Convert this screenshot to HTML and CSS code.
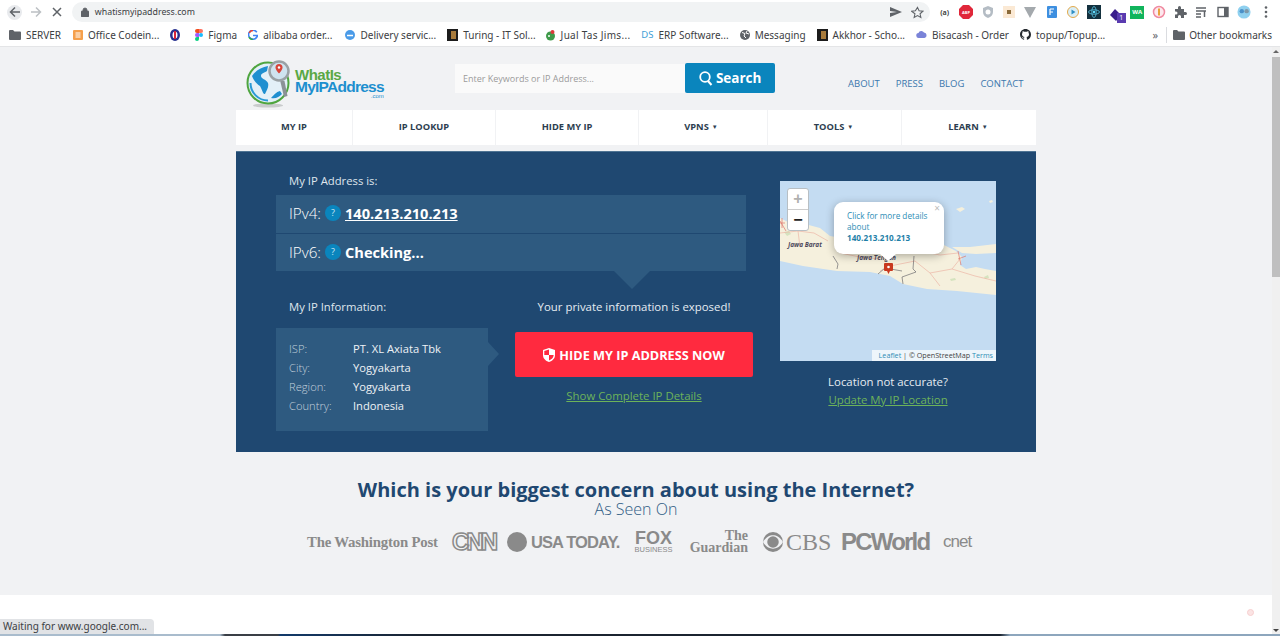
FILE: index.html
```html
<!DOCTYPE html>
<html lang="en">
<head>
    <meta charset="UTF-8">
    <meta name="viewport" content="width=device-width, initial-scale=1.0">
    <title>What Is My IP Address</title>
    <link rel="stylesheet" href="styles.css">
</head>
<body>
    <div class="toolbar">
        <div class="nav-btns">
            <span class="round-btn"><svg width="12" height="12" viewBox="0 0 12 12"><path d="M11 6H2M6 1.500 1.500 6 6 10.500" fill="none" stroke="#5f6368" stroke-width="1.500"/></svg></span>
            <span class="plain-btn"><svg width="12" height="12" viewBox="0 0 12 12"><path d="M1 6h9M6 1.500 10.500 6 6 10.500" fill="none" stroke="#bcc0c4" stroke-width="1.500"/></svg></span>
            <span class="plain-btn"><svg width="12" height="12" viewBox="0 0 12 12"><path d="M2 2l8 8M10 2l-8 8" fill="none" stroke="#5f6368" stroke-width="1.500"/></svg></span>
        </div>
        <div class="omnibox">
            <svg class="lock" width="8" height="10" viewBox="0 0 8 10"><path d="M1 4h6a1 1 0 0 1 1 1v4a1 1 0 0 1-1 1H1a1 1 0 0 1-1-1V5a1 1 0 0 1 1-1zM2 4V3a2 2 0 0 1 4 0v1" fill="#5f6368" stroke="#5f6368" stroke-width=".8"/></svg>
            <span class="url">whatismyipaddress.com</span>
            <svg class="omni-send" width="12" height="10" viewBox="0 0 12 10"><path d="M0 0l12 5-12 5V6l7-1-7-1z" fill="#5f6368"/></svg>
            <svg class="omni-star" width="13" height="13" viewBox="0 0 24 24"><path d="M12 2.500l2.900 6.400 7 .7-5.200 4.700 1.500 6.900-6.200-3.600-6.200 3.600 1.500-6.900L1.100 9.600l7-.7z" fill="none" stroke="#5f6368" stroke-width="2"/></svg>
        </div>
        <div class="ext-icons">
            <span class="ext ext-text">(a)</span>
            <svg class="ext" width="14" height="14" viewBox="0 0 14 14"><path d="M4 0h6l4 4v6l-4 4H4l-4-4V4z" fill="#e0273a"/><text x="7" y="9" class="abp">ABP</text></svg>
            <svg class="ext" width="14" height="14" viewBox="0 0 14 14"><path d="M7 1l5 2v4c0 3-2 5-5 6-3-1-5-3-5-6V3z" fill="#b4bcc4"/><circle cx="7" cy="7" r="2.500" fill="#fff"/></svg>
            <svg class="ext" width="14" height="14" viewBox="0 0 14 14"><rect x="1" y="1" width="12" height="12" fill="#fbe9d4"/><rect x="5" y="5" width="4" height="4" fill="#8a6a3a"/></svg>
            <svg class="ext" width="14" height="14" viewBox="0 0 14 14"><path d="M1 2h12L7 13z" fill="#a4a9ad"/></svg>
            <svg class="ext" width="14" height="14" viewBox="0 0 14 14"><rect x="2" y="1" width="10" height="12" rx="1" fill="#3d8fe0"/><path d="M5 4h4M5 7h3M5 4v6" stroke="#fff" stroke-width="1.200"/></svg>
            <svg class="ext" width="14" height="14" viewBox="0 0 14 14"><circle cx="7" cy="7" r="5.500" fill="#d9eef7" stroke="#e3a94a"/><path d="M5.500 4.500l4 2.500-4 2.500z" fill="#2f8fc4"/></svg>
            <svg class="ext" width="14" height="14" viewBox="0 0 14 14"><rect width="14" height="14" fill="#14313f"/><circle cx="7" cy="7" r="1.300" fill="#61dafb"/><ellipse cx="7" cy="7" rx="5.500" ry="2.200" fill="none" stroke="#61dafb" stroke-width=".7"/><ellipse cx="7" cy="7" rx="2.200" ry="5.500" fill="none" stroke="#61dafb" stroke-width=".7"/></svg>
            <span class="ext ext-badged"><svg width="14" height="14" viewBox="0 0 14 14"><path d="M6 1l6 6-5 6-6-6z" fill="#3a1e8c"/></svg><span class="ext-badge">1</span></span>
            <span class="ext ext-wa">WA</span>
            <svg class="ext" width="14" height="14" viewBox="0 0 14 14"><circle cx="7" cy="7" r="5.500" fill="#fde8ee" stroke="#f08aa0" stroke-width="1.500"/><path d="M7 3.500v7" stroke="#e9a13a" stroke-width="2"/></svg>
            <svg class="ext" width="14" height="14" viewBox="0 0 14 14"><path d="M2 4h3V2.500a1.500 1.500 0 0 1 3 0V4h3v3h1.500a1.500 1.500 0 0 1 0 3H11v3H8v-1.500a1.500 1.500 0 0 0-3 0V13H2V9.500h1a1.500 1.500 0 0 0 0-3H2z" fill="#5f6368"/></svg>
            <svg class="ext" width="14" height="14" viewBox="0 0 14 14"><path d="M2 3h10M2 6h10M2 9h5M2 12h5" stroke="#5f6368" stroke-width="1.300"/><path d="M10.500 6v6" stroke="#5f6368" stroke-width="1.500"/></svg>
            <svg class="ext" width="14" height="14" viewBox="0 0 14 14"><rect x="2" y="2.500" width="10" height="9" fill="none" stroke="#5f6368" stroke-width="1.400"/><rect x="8" y="2.500" width="4" height="9" fill="#5f6368"/></svg>
            <svg class="ext" width="14" height="14" viewBox="0 0 16 16"><circle cx="8" cy="8" r="7.500" fill="#8fd0ef"/><circle cx="5.500" cy="7" r="2.500" fill="#4a90c8"/><circle cx="11" cy="7" r="2.500" fill="#7f98a8"/></svg>
            <svg class="ext" width="14" height="14" viewBox="0 0 14 14"><circle cx="7" cy="2.500" r="1.300" fill="#5f6368"/><circle cx="7" cy="7" r="1.300" fill="#5f6368"/><circle cx="7" cy="11.500" r="1.300" fill="#5f6368"/></svg>
        </div>
    </div>

    <div class="bookmarks">
        <a class="bm bm-server"><svg width="12" height="10" viewBox="0 0 12 10"><path d="M0 1a1 1 0 0 1 1-1h3l1.500 1.500H11a1 1 0 0 1 1 1V9a1 1 0 0 1-1 1H1a1 1 0 0 1-1-1z" fill="#5f6368"/></svg>SERVER</a>
        <a class="bm"><svg width="10" height="10" viewBox="0 0 10 10"><rect width="10" height="10" rx="1" fill="#f5a04c"/><path d="M2.500 3h5M2.500 5h5M2.500 7h5" stroke="#fff"/></svg>Office Codein...</a>
        <a class="bm bm-icon"><svg width="10" height="12" viewBox="0 0 10 12"><ellipse cx="5" cy="6" rx="5" ry="6" fill="#27308f"/><ellipse cx="5" cy="6" rx="2.500" ry="3.500" fill="#fff"/><path d="M5 2v8" stroke="#d9263b" stroke-width="2"/></svg></a>
        <a class="bm"><svg width="8" height="12" viewBox="0 0 8 12"><circle cx="6" cy="6" r="2" fill="#1abcfe"/><path d="M2 0h2v4H2a2 2 0 0 1 0-4z" fill="#f24e1e"/><path d="M4 0h2a2 2 0 0 1 0 4H4z" fill="#ff7262"/><path d="M2 4h2v4H2a2 2 0 0 1 0-4z" fill="#a259ff"/><path d="M2 8h2v2a2 2 0 1 1-2-2z" fill="#0acf83"/></svg>Figma</a>
        <a class="bm bm-alibaba"><svg width="10" height="10" viewBox="0 0 10 10"><path d="M8.800 2.200A4.500 4.500 0 1 0 9.500 5.500H5" fill="none" stroke="#4285f4" stroke-width="1.600"/><path d="M1.200 2.800A4.500 4.500 0 0 1 5 .5" fill="none" stroke="#ea4335" stroke-width="1.600"/><path d="M1 7.200a4.500 4.500 0 0 0 4 2.300" fill="none" stroke="#34a853" stroke-width="1.600"/></svg>alibaba order...</a>
        <a class="bm"><svg width="10" height="10" viewBox="0 0 10 10"><circle cx="5" cy="5" r="5" fill="#4a9be8"/><path d="M2 5.500h6" stroke="#fff" stroke-width="1.500"/></svg>Delivery servic...</a>
        <a class="bm bm-turing"><svg width="11" height="12" viewBox="0 0 11 12"><rect width="11" height="12" fill="#1c1c1c"/><rect x="4" y="2" width="5" height="8" fill="#a87b3c"/></svg>Turing - IT Sol...</a>
        <a class="bm"><svg width="11" height="12" viewBox="0 0 11 12"><circle cx="5.500" cy="7" r="4.500" fill="#3f9a4a"/><circle cx="7.500" cy="3" r="2" fill="#dc3a3a"/><circle cx="4" cy="7" r="1" fill="#fff"/></svg><span class="bm-wide">Jual Tas Jims...</span></a>
        <a class="bm"><span class="ds">DS</span>ERP Software...</a>
        <a class="bm"><svg width="10" height="10" viewBox="0 0 10 10"><circle cx="5" cy="5" r="5" fill="#5f6368"/><path d="M2 2.500l3 1-1 2.500 2 2M7 1l-1 2 3 1" fill="none" stroke="#fff"/></svg>Messaging</a>
        <a class="bm"><svg width="11" height="12" viewBox="0 0 11 12"><rect width="11" height="12" fill="#1c1c1c"/><rect x="4" y="2" width="5" height="8" fill="#a87b3c"/></svg>Akkhor - Scho...</a>
        <a class="bm"><svg width="11" height="9" viewBox="0 0 11 9"><path d="M3 8a2.500 2.500 0 0 1-.5-5A3 3 0 0 1 8 2.500 2.800 2.800 0 0 1 8.500 8z" fill="#7a83d8"/></svg>Bisacash - Order</a>
        <a class="bm"><svg width="11" height="11" viewBox="0 0 16 16"><path d="M8 0C3.580 0 0 3.580 0 8c0 3.540 2.290 6.530 5.470 7.590.4.070.55-.17.55-.38 0-.19-.01-.82-.01-1.490-2.010.37-2.530-.49-2.690-.94-.09-.23-.48-.94-.82-1.130-.28-.15-.68-.52-.01-.53.630-.01 1.080.58 1.230.82.720 1.210 1.870.87 2.330.66.070-.52.280-.87.510-1.070-1.780-.2-3.640-.89-3.640-3.950 0-.87.310-1.590.820-2.150-.08-.2-.36-1.020.08-2.120 0 0 .67-.21 2.200.82.640-.18 1.320-.27 2-.27s1.360.09 2 .27c1.530-1.040 2.200-.82 2.200-.82.440 1.100.160 1.920.080 2.120.51.560.82 1.270.82 2.150 0 3.070-1.870 3.750-3.650 3.950.290.25.540.73.540 1.480 0 1.070-.01 1.930-.01 2.200 0 .21.150.46.550.38A8.010 8.010 0 0 0 16 8c0-4.420-3.580-8-8-8z" fill="#24292e"/></svg>topup/Topup...</a>
        <span class="bm-more">»</span>
        <a class="bm bm-other"><svg width="12" height="10" viewBox="0 0 12 10"><path d="M0 1a1 1 0 0 1 1-1h3l1.500 1.500H11a1 1 0 0 1 1 1V9a1 1 0 0 1-1 1H1a1 1 0 0 1-1-1z" fill="#5f6368"/></svg>Other bookmarks</a>
    </div>

    <div class="viewport">
        <div class="page">
            <div class="wrap">
                <header class="site-header">
                    <a class="logo">
                        <svg width="46" height="48" viewBox="0 0 46 48">
                            <ellipse cx="22" cy="45.500" rx="15" ry="2" fill="#c9cbcc"/>
                            <circle cx="22" cy="23" r="20.500" fill="#e3f0f8" stroke="#4fa53f" stroke-width="2"/>
                            <path d="M4.500 23a17.500 17.500 0 0 0 17.500 17.500" fill="none" stroke="#2a9ad6" stroke-width="2"/>
                            <path d="M6 16c4-6 10-9 16-10l-1 5c-3 2-6 2-6 5 0 3 5 3 7 7 1 4-1 7-3 11-2 1-3-5-5-8-3-2-6-5-8-10z" fill="#1f8fd0"/>
                            <path d="M25 38c3-3 5-6 9-7l2 3c-3 3-6 5-11 4z" fill="#1f8fd0"/>
                            <path d="M34 20l4.500 1 3 15-3.500 1z" fill="#8b9296"/>
                            <circle cx="33" cy="11" r="9.500" fill="#cfe3ef" stroke="#9aa1a5" stroke-width="2.500"/>
                            <path d="M33 4a3.500 3.500 0 0 1 3.500 3.500c0 2.500-3.500 6-3.500 6s-3.500-3.500-3.500-6A3.500 3.500 0 0 1 33 4z" fill="#d8453a"/>
                            <circle cx="33" cy="7.500" r="1.200" fill="#fff"/>
                        </svg>
                        <span class="logo-text">
                            <span class="logo-what">WhatIs</span>
                            <span class="logo-my">MyIPAddress</span>
                            <span class="logo-com">.com</span>
                        </span>
                    </a>
                    <form class="search">
                        <input class="search-input" type="text" placeholder="Enter Keywords or IP Address...">
                        <button class="search-btn" type="button">
                            <svg width="14" height="15" viewBox="0 0 14 15"><circle cx="6" cy="6" r="4.800" fill="none" stroke="#fff" stroke-width="1.800"/><path d="M9 10l3.500 4" stroke="#fff" stroke-width="2"/></svg>
                            Search
                        </button>
                    </form>
                    <nav class="top-links">
                        <a>ABOUT</a>
                        <a>PRESS</a>
                        <a>BLOG</a>
                        <a>CONTACT</a>
                    </nav>
                </header>

                <nav class="main-nav">
                    <a class="nav-myip">MY IP</a>
                    <a class="nav-lookup">IP LOOKUP</a>
                    <a class="nav-hide">HIDE MY IP</a>
                    <a class="nav-vpns">VPNS <i>▼</i></a>
                    <a class="nav-tools">TOOLS <i>▼</i></a>
                    <a class="nav-learn">LEARN <i>▼</i></a>
                </nav>

                <section class="panel">
                    <div class="panel-left">
                        <div class="label">My IP Address is:</div>
                        <div class="ip-row ip-row-first">
                            <span class="ip-kind">IPv4:</span>
                            <span class="help">?</span>
                            <a class="ip-value ip-link">140.213.210.213</a>
                        </div>
                        <div class="ip-row ip-row-second">
                            <span class="ip-kind">IPv6:</span>
                            <span class="help">?</span>
                            <span class="ip-value">Checking...</span>
                        </div>
                        <div class="lower">
                            <div class="lower-info">
                                <div class="label">My IP Information:</div>
                                <dl class="info-box">
                                    <dt>ISP:</dt><dd>PT. XL Axiata Tbk</dd>
                                    <dt>City:</dt><dd>Yogyakarta</dd>
                                    <dt>Region:</dt><dd>Yogyakarta</dd>
                                    <dt>Country:</dt><dd>Indonesia</dd>
                                </dl>
                            </div>
                            <div class="lower-cta">
                                <div class="exposed">Your private information is exposed!</div>
                                <a class="hide-btn">
                                    <svg width="12" height="14" viewBox="0 0 12 14"><path d="M6 0l6 2v5c0 3.500-2.500 5.800-6 7-3.500-1.200-6-3.500-6-7V2z" fill="#fff"/><path d="M6 1.500V7H1.300V2.900zM6 7h4.700c-.3 2.800-2.200 4.500-4.700 5.500z" fill="#ff2a3f"/></svg>
                                    HIDE MY IP ADDRESS NOW
                                </a>
                                <a class="green-link">Show Complete IP Details</a>
                            </div>
                        </div>
                    </div>
                    <div class="panel-right">
                        <div class="map">
                            <svg class="map-art" width="216" height="180" viewBox="0 0 216 180">
                                <rect width="216" height="180" fill="#c4dcf2"/>
                                <path d="M0 37L10 42 25 43 40 47 50 55 80 60 130 62 164 64 176 70 182 76 180 84 186 88 196 86 205 88 216 90V114L177 110 147 108 123 103 110 95 90 91 57 90 23 85 0 80Z" fill="#f5f0dd"/>
                                <path d="M172 66L190 66 216 63V72L196 73 182 72Z" fill="#f5f0dd"/>
                                <path d="M176 28l6-2 3 2-5 3zM209 20l3-1 1 2-3 1z" fill="#f5f0dd"/>
                                <path d="M4 51l5-1 2 3-4 2zM170 98l5-1 1 2-5 1zM204 96l4-2 1 3-4 1z" fill="#d5e3bf"/>
                                <g fill="none" stroke="#ecb6a6" stroke-width=".7">
                                    <path d="M18 50L20 66M34 52L48 60M0 52L18 50 34 52"/>
                                    <path d="M100 90L110 85 135 80 150 92 172 88 180 78M150 92L160 105M172 88L195 95 216 100"/>
                                    <path d="M60 72L80 76 100 78M140 70L160 74 178 72"/>
                                </g>
                                <g fill="none" stroke="#e0776c" stroke-width=".7">
                                    <path d="M0 42h5M2 37v10M0 40L6 50M178 70L181 84M178 78l8-3"/>
                                </g>
                                <g fill="none" stroke="#55555e" stroke-width=".6">
                                    <path d="M53 75L58 83 57 88M134 75L133 88 136 91 122 96 123 103M98 93L105 87 122 90"/>
                                </g>
                                <text class="map-place" x="8" y="66">Jawa Barat</text>
                                <text class="map-place" x="77" y="79">Jawa Tengah</text>
                            </svg>
                            <svg class="map-marker" width="9" height="11" viewBox="0 0 9 11"><path d="M1 0h7a1 1 0 0 1 1 1v6a1 1 0 0 1-1 1H6l-1.500 3L3 8H1a1 1 0 0 1-1-1V1a1 1 0 0 1 1-1z" fill="#c9391f"/><circle cx="4.500" cy="4" r="1.300" fill="#fff"/></svg>
                            <div class="zoom-ctl">
                                <span class="zoom-in">+</span>
                                <span class="zoom-out">−</span>
                            </div>
                            <div class="popup">
                                <span class="popup-close">×</span>
                                Click for more details about
                                <b>140.213.210.213</b>
                            </div>
                            <div class="attrib"><a>Leaflet</a> | © OpenStreetMap <a>Terms</a></div>
                        </div>
                        <div class="not-accurate">Location not accurate?</div>
                        <a class="green-link update-link">Update My IP Location</a>
                    </div>
                </section>

                <h2 class="concern">Which is your biggest concern about using the Internet?</h2>
                <div class="seen-on">As Seen On</div>
                <div class="press-logos">
                    <span class="pl-wapo">The Washington Post</span>
                    <span class="pl-cnn">CNN</span>
                    <span class="pl-usa"><i></i>USA TODAY.</span>
                    <span class="pl-fox"><b>FOX</b><small>BUSINESS</small></span>
                    <span class="pl-guardian"><span>The</span><span>Guardian</span></span>
                    <span class="pl-cbs"><svg width="22" height="22" viewBox="0 0 23 22"><circle cx="11.500" cy="11" r="10.500" fill="#8a8a8a"/><path d="M1 11c3-5 7-7 10.500-7S19 6 22 11c-3 5-7 7-10.500 7S4 16 1 11z" fill="#f1f2f4"/><circle cx="11.500" cy="11" r="6" fill="#8a8a8a"/></svg>CBS</span>
                    <span class="pl-pcw">PCWorld</span>
                    <span class="pl-cnet">cnet</span>
                </div>
            </div>
            <div class="white-band"><span class="corner-dot"></span></div>
        </div>
        <div class="scrollbar">
            <span class="sb-up"></span>
            <span class="sb-thumb"></span>
            <span class="sb-down"></span>
        </div>
        <div class="status">Waiting for www.google.com...</div>
        <div class="desk-edge"></div>
    </div>
</body>
</html>
```

FILE: styles.css
```css
html, body {
    margin: 0;
    height: 636px;
    overflow: hidden;
}
body {
    font-family: "Open Sans", Arial, sans-serif;
    background-color: #f1f2f4;
    color: #333;
}
a {
    cursor: pointer;
}

/* browser chrome */
.toolbar {
    display: flex;
    align-items: center;
    height: 24px;
    background: #fff;
}
.nav-btns {
    display: flex;
    align-items: center;
    width: 72px;
    padding-left: 7px;
    box-sizing: border-box;
    gap: 7px;
}
.round-btn, .plain-btn {
    display: flex;
    align-items: center;
    justify-content: center;
    width: 15px;
    height: 15px;
}
.round-btn {
    background: #e8eaed;
    border-radius: 50%;
}
.plain-btn {
    width: 14px;
}
.omnibox {
    display: flex;
    align-items: center;
    width: 860px;
    height: 20px;
    background: #f1f3f4;
    border-radius: 10px;
    box-sizing: border-box;
    padding: 0 6px 0 9px;
}
.url {
    margin-left: 6px;
    font-family: "Noto Sans", sans-serif;
    font-size: 8.8px;
    color: #3c4043;
    flex: 1;
}
.omni-star {
    margin-left: 9px;
}
.ext-icons {
    display: flex;
    align-items: center;
    margin-left: 8px;
}
.ext {
    display: block;
    width: 14px;
    margin-right: 7.4px;
    flex: none;
}
.ext-text {
    font-size: 7px;
    font-weight: 700;
    text-align: center;
    color: #444;
}
.abp {
    font-size: 4px;
    font-weight: 700;
    fill: #fff;
    text-anchor: middle;
}
.ext-badged {
    position: relative;
    height: 14px;
}
.ext-badge {
    position: absolute;
    right: -3px;
    bottom: -4px;
    width: 9px;
    height: 10px;
    background: #5a3bb0;
    color: #fff;
    font-size: 7px;
    line-height: 10px;
    text-align: center;
}
.ext-wa {
    height: 13px;
    background: #11b45c;
    color: #fff;
    font-size: 6px;
    font-weight: 700;
    line-height: 13px;
    text-align: center;
}
.bookmarks {
    display: flex;
    align-items: center;
    height: 21px;
    padding: 0 0 1px 9px;
    background: #fff;
    border-bottom: 1px solid #e4e5e7;
    font-family: "Noto Sans", sans-serif;
    font-size: 10px;
    color: #3c4043;
    white-space: nowrap;
}
.bm {
    display: flex;
    align-items: center;
    gap: 5px;
    margin-right: 11px;
    flex: none;
}
.bm-server { margin-right: 12px; }
.bm-icon { margin-right: 15px; }
.bm-alibaba { margin-right: 13px; }
.bm-turing { margin-right: 9px; }
.bm-wide {
    letter-spacing: .3px;
}
.ds {
    color: #3f9fd8;
    font-size: 9.5px;
}
.bm-more {
    margin-left: auto;
    padding-right: 8px;
    border-right: 1px solid #dadce0;
    margin-right: 6px;
    font-size: 11px;
    line-height: 16px;
    color: #5f6368;
}
.bm-other {
    gap: 4px;
    margin-right: 8px;
}

/* page */
.viewport {
    position: relative;
    display: flex;
    height: 589px;
    overflow: hidden;
}
.page {
    flex: 1;
    min-width: 0;
}
.wrap {
    width: 800px;
    margin: 0 auto 0 236px;
}
.site-header {
    display: flex;
    height: 63px;
}
.logo {
    display: flex;
    width: 219px;
    padding: 13px 0 0 10px;
    box-sizing: border-box;
    height: 63px;
    font-family: "Liberation Sans", Arial, sans-serif;
    font-weight: 700;
}
.logo-text {
    display: flex;
    flex-direction: column;
    margin-left: 3px;
    padding-top: 9px;
    line-height: 12px;
}
.logo-what {
    font-size: 15px;
    color: #5aa845;
    letter-spacing: -.5px;
}
.logo-my {
    font-size: 15.5px;
    color: #1d8fcf;
    letter-spacing: -.75px;
}
.logo-com {
    font-size: 6px;
    line-height: 7px;
    font-weight: 400;
    text-align: right;
    color: #1d8fcf;
}
.search {
    display: flex;
    width: 320px;
    height: 30px;
    margin-top: 16px;
}
.search-input {
    width: 231px;
    height: 29px;
    margin-top: 1px;
    padding: 0 8px;
    border: 0;
    box-sizing: border-box;
    background: #fafafa;
    font-family: inherit;
    font-size: 9px;
}
.search-input::placeholder {
    color: #9a9a9a;
}
.search-btn {
    display: flex;
    align-items: center;
    justify-content: center;
    gap: 3px;
    width: 90px;
    height: 30px;
    border: 0;
    border-radius: 2px;
    background: #0a85bd;
    color: #fff;
    font-family: inherit;
    font-size: 13.5px;
    font-weight: 700;
}
.top-links {
    display: flex;
    gap: 16px;
    margin: 30px 0 0 73px;
    font-size: 9.5px;
    line-height: 14px;
    height: 14px;
    color: #3b78ad;
}
.main-nav {
    display: flex;
    height: 35px;
    background: #fff;
    font-size: 9.3px;
    font-weight: 700;
    color: #2d3e50;
}
.main-nav a {
    display: flex;
    align-items: center;
    justify-content: center;
    gap: 3px;
    padding-bottom: 2px;
    box-sizing: border-box;
    border-right: 1px solid #f1f2f4;
}
.main-nav a:last-child {
    border-right: 0;
}
.main-nav i {
    font-size: 6px;
    font-style: normal;
}
.nav-myip { width: 117px; }
.nav-lookup { width: 143px; }
.nav-hide { width: 143px; }
.nav-vpns { width: 129px; padding-right: 4px; }
.nav-tools { width: 134px; padding-right: 2px; }
.nav-learn { width: 134px; padding-right: 2px; }

.panel {
    display: flex;
    height: 301px;
    margin-top: 6px;
    padding: 20px 0 0 40px;
    box-sizing: border-box;
    background: #1f4871;
    border-top: 1px solid #4f7493;
    color: #eef2f6;
}
.panel-left {
    width: 478px;
}
.label {
    padding-left: 13px;
    font-size: 11.3px;
    line-height: 17px;
    color: #dfe6ed;
}
.ip-row {
    display: flex;
    align-items: center;
    width: 470px;
    padding: 0 0 2px 13px;
    box-sizing: border-box;
    background: #2e5a80;
}
.ip-row-first {
    height: 38px;
    margin-top: 6px;
}
.ip-row-second {
    position: relative;
    height: 37px;
    margin-top: 1px;
}
.ip-row-second::after {
    content: "";
    position: absolute;
    left: 338px;
    top: 37px;
    border-style: solid;
    border-width: 18px 18px 0;
    border-color: #2e5a80 transparent transparent;
}
.ip-kind {
    font-size: 15.2px;
    font-weight: 300;
    width: 36px;
    color: #fff;
}
.help {
    width: 16px;
    height: 16px;
    margin-right: 4px;
    border-radius: 50%;
    background: #0a85bd;
    font-size: 9px;
    line-height: 16px;
    text-align: center;
    color: #cfe6f3;
}
.ip-value {
    font-size: 14.6px;
    font-weight: 700;
    color: #fff;
}
.ip-link {
    text-decoration: underline;
}
.lower {
    display: flex;
    margin-top: 27px;
}
.lower-info {
    width: 212px;
}
.info-box {
    position: relative;
    display: grid;
    grid-template-columns: 64px 1fr;
    grid-auto-rows: 19px;
    align-items: center;
    height: 103px;
    margin: 13px 0 0;
    padding: 11px 13px 0;
    box-sizing: border-box;
    background: #2e5a80;
    font-size: 11.2px;
}
.info-box::after {
    content: "";
    position: absolute;
    left: 212px;
    top: 14px;
    border-style: solid;
    border-width: 12px 0 12px 11px;
    border-color: transparent transparent transparent #2e5a80;
}
.info-box dt {
    font-weight: 300;
    color: #c3d0dc;
}
.info-box dd {
    margin: 0;
    color: #eef2f6;
}
.lower-cta {
    width: 238px;
    margin-left: 27px;
    display: flex;
    flex-direction: column;
    align-items: center;
}
.exposed {
    font-size: 11.4px;
    line-height: 17px;
    white-space: nowrap;
    color: #e6ecf1;
}
.hide-btn {
    display: flex;
    align-items: center;
    justify-content: center;
    gap: 4px;
    width: 100%;
    height: 45px;
    margin-top: 17px;
    border-radius: 2px;
    background: #ff2a3f;
    color: #fff;
    font-size: 12.7px;
    font-weight: 700;
}
.green-link {
    margin-top: 10px;
    font-size: 11.4px;
    line-height: 18px;
    color: #6db35a;
    text-decoration: underline;
}
.panel-right {
    display: flex;
    flex-direction: column;
    align-items: center;
    width: 216px;
    margin-left: 26px;
    padding-top: 9px;
}

/* leaflet map */
.map {
    position: relative;
    width: 216px;
    height: 180px;
    overflow: hidden;
}
.map-art {
    display: block;
}
.map-place {
    font-size: 6.5px;
    font-style: italic;
    font-weight: 700;
    fill: #4d4a5c;
}
.map-marker {
    position: absolute;
    left: 104px;
    top: 82px;
}
.zoom-ctl {
    position: absolute;
    left: 7px;
    top: 7px;
    width: 22px;
    border: 1px solid #b8bfc4;
    border-radius: 3px;
    background: #fff;
    box-sizing: border-box;
    text-align: center;
    font-family: "Liberation Sans", Arial, sans-serif;
    font-weight: 700;
    font-size: 16px;
    line-height: 20px;
}
.zoom-in {
    display: block;
    height: 20px;
    color: #b0b0b0;
    border-bottom: 1px solid #ccc;
}
.zoom-out {
    display: block;
    height: 20px;
    color: #222;
}
.popup {
    position: absolute;
    left: 54px;
    top: 21px;
    width: 110px;
    height: 52px;
    padding: 8px 13px 0;
    box-sizing: border-box;
    background: #fff;
    border-radius: 9px;
    box-shadow: 0 2px 8px rgba(0, 0, 0, .3);
    font-size: 8.2px;
    line-height: 11px;
    color: #2d8eb6;
}
.popup::after {
    content: "";
    position: absolute;
    left: 46px;
    top: 52px;
    border-style: solid;
    border-width: 7px 8px 0;
    border-color: #fff transparent transparent;
}
.popup b {
    display: block;
    color: #1f7fa8;
}
.popup-close {
    position: absolute;
    right: 4px;
    top: 1px;
    font-size: 10px;
    color: #bbb;
}
.attrib {
    position: absolute;
    right: 0;
    bottom: 0;
    width: 124px;
    height: 11px;
    padding-right: 3px;
    box-sizing: border-box;
    background: rgba(255, 255, 255, .7);
    font-size: 7.2px;
    line-height: 11px;
    text-align: right;
    white-space: nowrap;
    color: #444;
}
.attrib a {
    color: #2d8eb6;
}
.not-accurate {
    margin-top: 12px;
    font-size: 11.4px;
    line-height: 18px;
    color: #e6ecf1;
}
.update-link {
    margin-top: 0;
    line-height: 18px;
}

/* below the panel */
.concern {
    margin: 26px 0 0;
    font-size: 20px;
    line-height: 24px;
    font-weight: 700;
    text-align: center;
    color: #1f4871;
}
.seen-on {
    font-size: 16px;
    font-weight: 300;
    line-height: 14px;
    text-align: center;
    color: #2f5c85;
}
.press-logos {
    display: flex;
    align-items: center;
    height: 28px;
    margin: 12px 0 0 71px;
    gap: 13px;
    color: #8a8a8a;
    white-space: nowrap;
    font-family: "Liberation Sans", Arial, sans-serif;
}
.pl-wapo {
    width: 131px;
    font-family: "Liberation Serif", serif;
    font-weight: 700;
    font-size: 14.8px;
    letter-spacing: -.2px;
}
.pl-cnn {
    width: 42px;
    margin-left: 1px;
    font-size: 24px;
    font-weight: 700;
    letter-spacing: -3px;
    color: transparent;
    -webkit-text-stroke: 1.5px #8a8a8a;
}
.pl-usa {
    display: flex;
    align-items: center;
    gap: 4px;
    width: 113px;
    font-size: 16.5px;
    font-weight: 700;
    letter-spacing: -.9px;
}
.pl-usa i {
    flex: none;
    width: 20px;
    height: 20px;
    border-radius: 50%;
    background: #8a8a8a;
}
.pl-fox {
    display: flex;
    flex-direction: column;
    width: 41px;
    text-align: center;
    font-size: 18px;
    line-height: 15px;
}
.pl-fox small {
    font-size: 7.5px;
    line-height: 7px;
}
.pl-guardian {
    display: flex;
    flex-direction: column;
    align-items: flex-end;
    width: 61px;
    font-family: "Liberation Serif", serif;
    font-weight: 700;
    font-size: 14px;
    line-height: 12px;
}
.pl-cbs {
    display: flex;
    align-items: center;
    gap: 2px;
    width: 66px;
    margin-left: 1px;
    font-family: "Liberation Serif", serif;
    font-size: 24px;
}
.pl-cbs svg {
    flex: none;
}
.pl-pcw {
    width: 89px;
    font-size: 24px;
    font-weight: 700;
    letter-spacing: -1.8px;
}
.pl-cnet {
    width: 28px;
    font-family: "Liberation Sans Narrow", "Liberation Sans", sans-serif;
    font-size: 17px;
    letter-spacing: -1px;
}
.white-band {
    position: relative;
    height: 60px;
    margin-top: 39px;
    background: #fff;
}
.corner-dot {
    position: absolute;
    right: 18px;
    top: 14px;
    width: 7px;
    height: 7px;
    border-radius: 50%;
    border: 1px solid #f7cfcf;
    background: #fbe4e4;
    box-sizing: border-box;
}

/* scrollbar, status bubble */
.scrollbar {
    position: relative;
    display: flex;
    flex-direction: column;
    align-items: center;
    width: 8px;
    background: #f0f0f0;
}
.sb-up, .sb-down {
    width: 0;
    border-style: solid;
    border-color: transparent;
    flex: none;
}
.sb-up {
    margin-top: 3px;
    border-width: 0 3px 3px;
    border-bottom-color: #666;
}
.sb-thumb {
    width: 8px;
    height: 220px;
    margin-top: 4px;
    background: #bfbfbf;
}
.sb-down {
    margin-top: auto;
    margin-bottom: 4px;
    border-width: 3px 3px 0;
    border-top-color: #444;
}
.status {
    position: absolute;
    left: 0;
    bottom: 0;
    width: 154px;
    height: 17px;
    padding-left: 3px;
    box-sizing: border-box;
    background: #e1e3e6;
    border-top-right-radius: 4px;
    font-family: "Noto Sans", sans-serif;
    font-size: 10px;
    line-height: 15px;
    color: #3c4043;
    white-space: nowrap;
}
.desk-edge {
    position: absolute;
    left: 0;
    right: 0;
    bottom: 0;
    height: 2px;
    background: linear-gradient(to right, #a9bccd 0, #a9bccd 220px, #3a3f46 225px, #3a3f46 278px, #123a6b 280px, #1b2430 420px, #1b2430 1000px, #8da6bd 1010px, #8da6bd 100%);
}
```
